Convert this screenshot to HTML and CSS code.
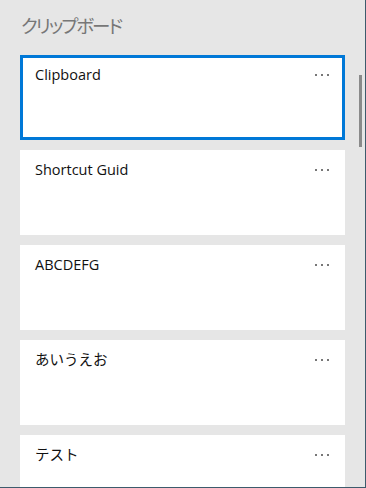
FILE: index.html
```html
<!DOCTYPE html>
<html lang="ja">
<head>
<meta charset="utf-8">
<link rel="stylesheet" href="styles.css">
</head>
<body>
<div class="window">
  <h1 class="title">クリップボード</h1>
  <div class="list">
    <div class="card selected"><span class="text">Clipboard</span><span class="more"><i></i><i></i><i></i></span></div>
    <div class="card"><span class="text">Shortcut Guid</span><span class="more"><i></i><i></i><i></i></span></div>
    <div class="card"><span class="text">ABCDEFG</span><span class="more"><i></i><i></i><i></i></span></div>
    <div class="card"><span class="text">あいうえお</span><span class="more"><i></i><i></i><i></i></span></div>
    <div class="card"><span class="text">テスト</span><span class="more"><i></i><i></i><i></i></span></div>
  </div>
  <div class="thumb"></div>
</div>
</body>
</html>
```
FILE: styles.css
```css
html, body {
  margin: 0;
  padding: 0;
}
body {
  background: #e6e6e6;
  font-family: "Open Sans", "Noto Sans CJK JP", sans-serif;
}
.window {
  position: relative;
  width: 366px;
  height: 488px;
  box-sizing: border-box;
  border-right: 1px solid #3d5b6c;
  border-bottom: 1px solid #3d5b6c;
  overflow: hidden;
}
.title {
  margin: 0;
  padding: 12px 0 0 21px;
  height: 55px;
  box-sizing: border-box;
  font-family: "Noto Sans CJK JP", sans-serif;
  font-feature-settings: "palt";
  font-weight: 400;
  font-size: 18.5px;
  letter-spacing: -2px;
  line-height: 26px;
  color: #777777;
}
.list {
  display: flex;
  flex-direction: column;
  gap: 10px;
  padding-left: 20px;
}
.card {
  width: 325px;
  height: 85px;
  box-sizing: border-box;
  background: #ffffff;
  display: flex;
  justify-content: space-between;
  align-items: flex-start;
  padding: 10px 16px 0 15px;
  flex-shrink: 0;
}
.card.selected {
  border: 3px solid #0078d7;
  padding: 7px 13px 0 12px;
}
.text {
  font-size: 14.5px;
  line-height: 20px;
  color: #111111;
}
.more {
  display: flex;
  gap: 4px;
  padding-top: 9px;
}
.more i {
  display: block;
  width: 2px;
  height: 2px;
  background: #777777;
}
.thumb {
  position: absolute;
  left: 359px;
  top: 75px;
  width: 3px;
  height: 72px;
  background: #8a8a8a;
}
```
